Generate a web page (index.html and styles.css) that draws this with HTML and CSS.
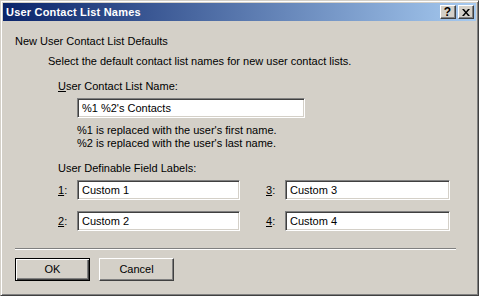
FILE: index.html
```html
<!DOCTYPE html>
<html lang="en">
<head>
  <meta charset="UTF-8" />
  <title>User Contact List Names</title>
  <link rel="stylesheet" href="styles.css">
</head>
<body>

  <div class="window">
    <div class="titlebar">
      <span class="title">User Contact List Names</span>
      <div class="title-buttons">
        <span class="tbtn">?</span>
        <span class="tbtn close">
          <svg width="8" height="7" viewBox="0 0 8 7"><path d="M0 0h2l2 2.5L6 0h2L5 3.5 8 7H6L4 4.5 2 7H0l3-3.5z" fill="#000"/></svg>
        </span>
      </div>
    </div>

    <div class="content">
      <p class="group-title">New User Contact List Defaults</p>
      <p class="hint">Select the default contact list names for new user contact lists.</p>

      <div class="block">
        <p class="label"><u>U</u>ser Contact List Name:</p>
        <div class="field wide">%1 %2's Contacts</div>
        <p class="note">%1 is replaced with the user's first name.<br>%2 is replaced with the user's last name.</p>

        <p class="label labels-title">User Definable Field Labels:</p>
        <div class="grid">
          <span class="num"><u>1</u>:</span>
          <div class="field">Custom 1</div>
          <span class="num right"><u>3</u>:</span>
          <div class="field">Custom 3</div>
          <span class="num"><u>2</u>:</span>
          <div class="field">Custom 2</div>
          <span class="num right"><u>4</u>:</span>
          <div class="field">Custom 4</div>
        </div>
      </div>

      <div class="separator"></div>

      <div class="actions">
        <button class="btn default">OK</button>
        <button class="btn">Cancel</button>
      </div>
    </div>
  </div>

</body>
</html>
```

FILE: styles.css
```css
* {
  box-sizing: border-box;
  margin: 0;
  padding: 0;
}

body {
  width: 479px;
  height: 296px;
  font-family: Tahoma, 'Liberation Sans', Arial, sans-serif;
  font-size: 11px;
  line-height: 13px;
  color: #000;
  background: #d4d0c8;
}

.window {
  width: 479px;
  height: 296px;
  background: #d4d0c8;
  border-top: 1px solid #d4d0c8;
  border-left: 1px solid #d4d0c8;
  border-right: 1px solid #404040;
  border-bottom: 1px solid #404040;
  box-shadow: inset 1px 1px #fff, inset -1px -1px #808080;
  padding: 2px;
  display: flex;
  flex-direction: column;
}

.titlebar {
  height: 18px;
  background: linear-gradient(90deg, #0a246a, #a6caf0);
  display: flex;
  align-items: center;
  justify-content: space-between;
  padding: 0 2px 0 3px;
}

.title {
  color: #fff;
  font-weight: bold;
  font-size: 11px;
  letter-spacing: 0.2px;
}

.title-buttons {
  display: flex;
  gap: 2px;
}

.tbtn {
  width: 16px;
  height: 14px;
  background: #d4d0c8;
  border-top: 1px solid #fff;
  border-left: 1px solid #fff;
  border-right: 1px solid #404040;
  border-bottom: 1px solid #404040;
  box-shadow: inset -1px -1px #808080;
  display: flex;
  align-items: center;
  justify-content: center;
  font-weight: bold;
  font-size: 12px;
  line-height: 12px;
  padding-right: 1px;
}

.content {
  flex: 1;
  display: flex;
  flex-direction: column;
  padding: 14px 0 0 12px;
}

.hint {
  margin: 7px 0 0 33px;
}

.block {
  margin: 12px 0 0 43px;
}

.field {
  height: 20px;
  background: #fff;
  border: 1px solid;
  border-color: #808080 #fff #fff #808080;
  box-shadow: inset 1px 1px #404040, inset -1px -1px #d4d0c8;
  padding: 3px 0 0 4px;
  white-space: nowrap;
}

.field.wide {
  width: 228px;
  margin: 5px 0 0 19px;
}

.note {
  margin: 6px 0 0 19px;
}

.labels-title {
  margin-top: 12px;
}

.grid {
  display: grid;
  grid-template-columns: 19px 163px 45px 165px;
  row-gap: 11px;
  margin-top: 5px;
  align-items: center;
}

.num {
  padding-top: 1px;
}

.num.right {
  padding-left: 26px;
}

.separator {
  margin-top: 17px;
  width: 441px;
  height: 2px;
  border-top: 1px solid #808080;
  border-bottom: 1px solid #fff;
}

.actions {
  display: flex;
  gap: 9px;
  margin-top: 8px;
}

.btn {
  width: 75px;
  height: 23px;
  font: inherit;
  color: #000;
  background: #d4d0c8;
  border-top: 1px solid #fff;
  border-left: 1px solid #fff;
  border-right: 1px solid #404040;
  border-bottom: 1px solid #404040;
  box-shadow: inset -1px -1px #808080;
}

.btn.default {
  border: 1px solid #000;
  box-shadow: inset 1px 1px #fff, inset -1px -1px #404040, inset -2px -2px #808080;
}
```
